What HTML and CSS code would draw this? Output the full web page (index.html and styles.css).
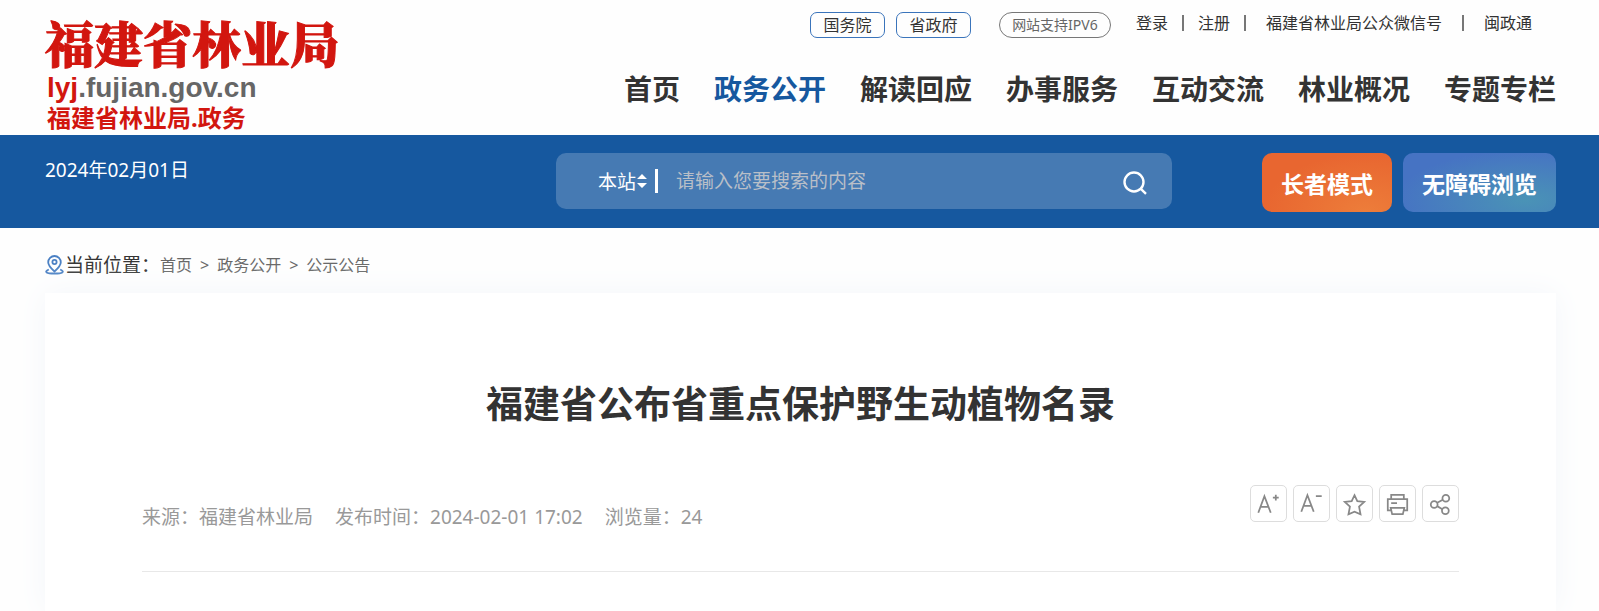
FILE: index.html
```html
<!DOCTYPE html>
<html lang="zh-CN">
<head>
<meta charset="utf-8">
<meta name="viewport" content="width=device-width, initial-scale=1">
<title>福建省公布省重点保护野生动植物名录</title>
<link rel="stylesheet" href="styles.css">
</head>
<body>
<header class="header">
  <a class="logo" href="#">
    <span class="logo-name">福建省林业局</span>
    <span class="logo-domain"><span class="logo-host">lyj</span>.fujian.gov.cn</span>
    <span class="logo-dept">福建省林业局.政务</span>
  </a>
  <div class="header-side">
    <div class="toplinks">
      <a class="tag" href="#">国务院</a>
      <a class="tag" href="#">省政府</a>
      <a class="pill" href="#">网站支持IPV6</a>
      <div class="account">
        <a href="#">登录</a>
        <a class="divided" href="#">注册</a>
        <a class="divided wide-after" href="#">福建省林业局公众微信号</a>
        <a class="divided wide" href="#">闽政通</a>
      </div>
    </div>
    <nav class="nav">
      <a href="#">首页</a>
      <a class="active" href="#">政务公开</a>
      <a href="#">解读回应</a>
      <a href="#">办事服务</a>
      <a href="#">互动交流</a>
      <a href="#">林业概况</a>
      <a href="#">专题专栏</a>
    </nav>
  </div>
</header>

<div class="band">
  <time class="today" datetime="2024-02-01">2024年02月01日</time>
  <form class="search" role="search">
    <button class="scope" type="button">本站
      <svg width="10" height="16" viewBox="0 0 10 16" fill="#fff" aria-hidden="true"><path d="M5 1 10 6H0ZM5 15 0 10H10Z"/></svg>
    </button>
    <input class="query" type="text" aria-label="搜索" placeholder="请输入您要搜索的内容">
    <button class="go" type="submit" aria-label="搜索">
      <svg width="24" height="24" viewBox="0 0 24 24" fill="none" stroke="#fff" stroke-width="2.400" aria-hidden="true"><circle cx="11" cy="11" r="9.500"/><path d="m17.600 17.600 5.400 5.200"/></svg>
    </button>
  </form>
  <div class="modes">
    <button class="mode elder" type="button">长者模式</button>
    <button class="mode access" type="button">无障碍浏览</button>
  </div>
</div>

<main class="main">
  <div class="crumbs">
    <svg width="20" height="20" viewBox="0 0 20 20" fill="none" stroke="#4a80c4" stroke-width="1.800" aria-hidden="true"><path d="M9.500 16.500C5.500 13 3.200 10.400 3.200 7.300a6.300 6.300 0 0 1 12.600 0c0 3.100-2.300 5.700-6.300 9.200Z"/><circle cx="9.500" cy="7" r="2.100"/><path d="M3.800 14.500C-1.500 17 1.500 18.500 9.500 18.500s11-1.500 5.700-4"/></svg>
    <span class="crumbs-label">当前位置：</span>
    <nav class="trail">
      <a href="#">首页</a><span>&gt;</span><a href="#">政务公开</a><span>&gt;</span><a href="#">公示公告</a>
    </nav>
  </div>

  <article class="card">
    <h1 class="title">福建省公布省重点保护野生动植物名录</h1>
    <div class="meta">
      <div class="facts">
        <span>来源：福建省林业局</span>
        <span>发布时间：2024-02-01 17:02</span>
        <span>浏览量：24</span>
      </div>
      <div class="tools">
        <button type="button" aria-label="放大字体"><svg viewBox="0 0 36 36"><path d="m7.500 27.500 6.300-17 6.500 17M9.800 21.500h8.200M25.500 9v6M22.500 12h6"/></svg></button>
        <button type="button" aria-label="缩小字体"><svg viewBox="0 0 36 36"><path d="m7.500 26.500 6.300-17 6.500 17M9.800 20.500h8.200M22.500 10.500h6"/></svg></button>
        <button type="button" aria-label="收藏"><svg viewBox="0 0 36 36"><path d="m18 9.500 2.900 6 7.100.9-5.300 4.800 1.500 8L18 26.500l-6.200 2.700 1.500-8L8 16.400l7.100-.9Z"/></svg></button>
        <button type="button" aria-label="打印"><svg viewBox="0 0 36 36"><path d="M11.500 13V9h13v4M11 25H8V13.500h20V25h-3M11.500 17.500h6M11 22.500h14L23.500 29h-11Z"/></svg></button>
        <button type="button" aria-label="分享"><svg viewBox="0 0 36 36"><circle cx="11.500" cy="19" r="3.500"/><circle cx="23.500" cy="12.500" r="3.500"/><circle cx="23" cy="25.500" r="3.500"/><path d="m14.600 17.300 5.800-3.200M14.600 20.700l5.300 3.100"/></svg></button>
      </div>
    </div>
  </article>
</main>
</body>
</html>
```
FILE: styles.css
```css
* {
  box-sizing: border-box;
}

body {
  margin: 0;
  min-height: 100vh;
  display: flex;
  flex-direction: column;
  background: #fefefe;
  color: #333;
  font-family: "Noto Sans", "Noto Sans CJK SC", sans-serif;
  font-size: 16px;
}

a {
  color: inherit;
  text-decoration: none;
}

button,
input {
  margin: 0;
  padding: 0;
  border: 0;
  background: none;
  color: inherit;
  font: inherit;
}

svg {
  display: block;
  flex: none;
}

.header {
  display: flex;
  justify-content: space-between;
  padding: 12px 43px 0 45px;
  height: 135px;
}

.logo {
  display: flex;
  flex-direction: column;
  color: #d2160f;
  white-space: nowrap;
}

.logo-name {
  font-family: "Noto Serif CJK SC", "Noto Sans CJK SC", serif;
  font-size: 49px;
  font-weight: 900;
  line-height: 61px;
  -webkit-text-stroke: 1px #d2160f;
}

.logo-domain {
  padding-left: 2px;
  color: #666;
  font-family: "Liberation Sans", Arial, sans-serif;
  font-size: 28px;
  font-weight: 700;
  line-height: 30px;
}

.logo-host {
  color: #d2160f;
}

.logo-dept {
  padding-left: 2px;
  font-size: 24px;
  font-weight: 700;
  line-height: 30px;
}

.header-side {
  display: flex;
  flex-direction: column;
  align-items: flex-end;
  white-space: nowrap;
}

.toplinks {
  display: flex;
  padding-right: 24px;
}

.tag,
.pill {
  display: flex;
  align-items: center;
  justify-content: center;
  height: 26px;
  line-height: 24px;
}

.tag {
  width: 75px;
  margin-right: 11px;
  border: 1px solid #3a74bb;
  border-radius: 7px;
}

.pill {
  width: 112px;
  margin-left: 17px;
  border: 1px solid #777;
  border-radius: 13px;
  color: #666;
  font-size: 14px;
}

.account {
  display: flex;
  align-items: center;
  height: 20px;
  padding-left: 25px;
}

.divided::before {
  content: "";
  display: inline-block;
  width: 2px;
  height: 16px;
  margin: 0 14px;
  background: #777;
  vertical-align: -2px;
}

.wide-after::before {
  margin-right: 20px;
}

.wide::before {
  margin: 0 20px;
}

.nav {
  display: flex;
  gap: 34px;
  margin-top: 31px;
  font-size: 28px;
  font-weight: 700;
  line-height: 40px;
}

.active {
  color: #16589f;
}

.band {
  display: flex;
  align-items: flex-start;
  padding: 18px 43px 16px 45px;
  background: #16589f;
  color: #fff;
  font-size: 19px;
}

.today {
  flex: 1;
  line-height: 34px;
  white-space: nowrap;
}

.search {
  display: flex;
  align-items: center;
  width: 616px;
  height: 56px;
  margin-right: 90px;
  padding: 0 25px 0 42px;
  border-radius: 10px;
  background: #467ab3;
}

.scope {
  display: flex;
  align-items: center;
  gap: 1px;
  height: 24px;
  padding-right: 8px;
  border-right: 3px solid #fff;
}

.query {
  flex: 1;
  min-width: 0;
  height: 40px;
  padding-left: 18px;
}

.query::placeholder {
  color: #b9bfc8;
  opacity: 1;
}

.go {
  padding-top: 4px;
}

.modes {
  display: flex;
  gap: 11px;
}

.mode {
  height: 59px;
  padding: 0 19px;
  border-radius: 10px;
  font-size: 23px;
  font-weight: 700;
  white-space: nowrap;
}

.elder {
  background: radial-gradient(ellipse at 80% 100%, #ed7d3a, #e86630 70%);
}

.access {
  background: radial-gradient(ellipse at 80% 80%, #4a93b6, #4673c3 75%);
}

.main {
  flex: 1;
  display: flex;
  flex-direction: column;
  padding: 0 43px 0 45px;
}

.crumbs {
  display: flex;
  align-items: center;
  padding: 21px 0 12px;
  line-height: 32px;
}

.crumbs-label {
  font-size: 19px;
}

.trail {
  display: flex;
  gap: 8px;
  color: #666;
}

.card {
  flex: 1;
  padding: 85px 97px 0;
  background: #fff;
  box-shadow: 0 0 30px #f4f7fb;
}

.title {
  margin: 0;
  font-size: 37px;
  font-weight: 700;
  line-height: 52px;
  text-align: center;
}

.meta {
  display: flex;
  justify-content: space-between;
  margin-top: 55px;
  padding-bottom: 38px;
  border-bottom: 1px solid #e8e8e8;
}

.facts {
  display: flex;
  gap: 22px;
  padding-top: 16px;
  color: #999;
  font-size: 19px;
  line-height: 32px;
}

.tools {
  display: flex;
  gap: 6px;
}

.tools button {
  width: 37px;
  height: 37px;
  border: 1px solid #ddd;
  border-radius: 5px;
}

.tools svg {
  width: 100%;
  fill: none;
  stroke: #888;
  stroke-width: 1.8;
}
```
